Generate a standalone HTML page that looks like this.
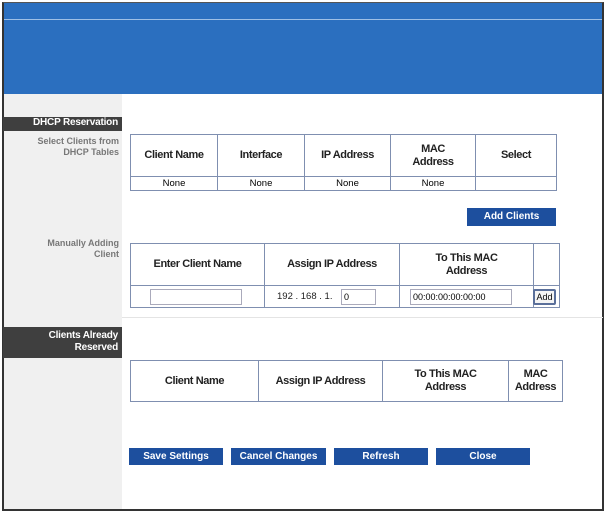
<!DOCTYPE html>
<html><head><style>
body{margin:0;width:607px;height:515px;background:#fff;position:relative;overflow:hidden;font-family:"Liberation Sans",Arial,sans-serif}
div{position:absolute;box-sizing:border-box}
.frame{left:2px;top:2px;width:602px;height:509px;border:2px solid #333;border-top:1px solid #555}
.hdr{left:3px;top:3px;width:600px;height:91px;background:#2b6fbf}
.hl{left:3px;top:19px;width:600px;height:1px;background:#9fc0e6}
.side{left:3px;top:94px;width:119px;height:416px;background:#f0f0f0}
.dark{background:#3f3f3f;color:#fff;font-weight:bold;font-size:10px;text-align:right;padding-right:4px;line-height:12px;letter-spacing:-0.2px}
.lbl{color:#777;font-size:9px;text-align:right;font-weight:bold;line-height:11px}
table{position:absolute;border-collapse:collapse;font-size:11px}
td{border:1px solid #7f8fb0;text-align:center;padding:0}
th{border:1px solid #7f8fb0;font-weight:bold;color:#222;font-size:11px;line-height:13px;padding:0;letter-spacing:-0.4px}
.btn{background:#1d4f9e;color:#fff;font-weight:bold;font-size:10px;text-align:center;line-height:17px}
.inp{border:1px solid #aab;background:#fff;font-size:9px;line-height:14px;padding-left:2px;text-align:left}
</style></head><body>
<div class="hdr"></div><div class="hl"></div>
<div class="side"></div>
<div class="frame"></div>
<div class="dark" style="left:3px;top:117px;width:119px;height:14px">DHCP Reservation</div>
<div class="lbl" style="left:3px;top:136px;width:116px">Select Clients from<br>DHCP Tables</div>
<table style="left:130px;top:134px;width:427px">
<tr style="height:42px"><th style="width:86px">Client Name</th><th style="width:86px">Interface</th><th style="width:85px">IP Address</th><th style="width:84px">MAC<br>Address</th><th>Select</th></tr>
<tr style="height:14px;font-size:9.5px"><td>None</td><td>None</td><td>None</td><td>None</td><td></td></tr>
</table>
<div class="btn" style="left:467px;top:208px;width:89px;height:18px">Add Clients</div>
<div class="lbl" style="left:3px;top:238px;width:116px">Manually Adding<br>Client</div>
<table style="left:130px;top:243px;width:430px">
<tr style="height:42px"><th style="width:133px">Enter Client Name</th><th style="width:134px">Assign IP Address</th><th style="width:133px">To This MAC<br>Address</th><th></th></tr>
<tr style="height:22px"><td></td><td></td><td></td><td></td></tr>
</table>
<div class="inp" style="left:150px;top:289px;width:92px;height:16px"></div>
<div style="left:277px;top:291px;font-size:9.5px;color:#222">192 . 168 . 1.</div>
<div class="inp" style="left:341px;top:289px;width:35px;height:16px">0</div>
<div class="inp" style="left:410px;top:289px;width:102px;height:16px">00:00:00:00:00:00</div>
<div style="left:533px;top:289px;width:23px;height:16px;border:2px solid #5a6f9a;font-size:9px;text-align:center;line-height:12px;background:#f4f4f4;border-radius:2px">Add</div>
<div style="left:122px;top:317px;width:481px;height:1px;background:#e4e4e4"></div>
<div class="dark" style="left:3px;top:327px;width:119px;height:31px;padding-top:3px">Clients Already<br>Reserved</div>
<table style="left:130px;top:360px;width:433px">
<tr style="height:41px"><th style="width:127px">Client Name</th><th style="width:123px">Assign IP Address</th><th style="width:125px">To This MAC<br>Address</th><th>MAC<br>Address</th></tr>
</table>
<div class="btn" style="left:129px;top:448px;width:94px;height:17px">Save Settings</div>
<div class="btn" style="left:231px;top:448px;width:95px;height:17px">Cancel Changes</div>
<div class="btn" style="left:334px;top:448px;width:94px;height:17px">Refresh</div>
<div class="btn" style="left:436px;top:448px;width:94px;height:17px">Close</div>
</body></html>
